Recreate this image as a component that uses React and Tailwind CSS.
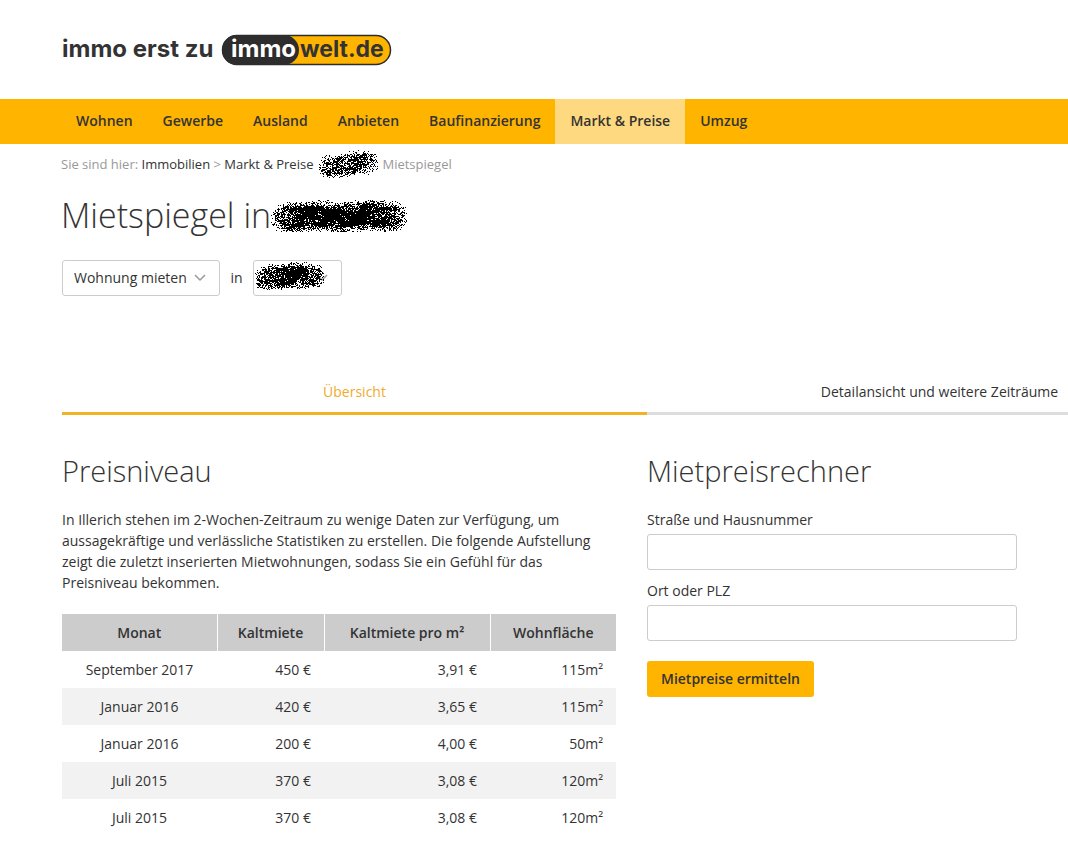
import React from "react";

const NAV = ["Wohnen", "Gewerbe", "Ausland", "Anbieten", "Baufinanzierung", "Markt & Preise", "Umzug"];

const ROWS = [
  ["September 2017", "450 €", "3,91 €", "115m²"],
  ["Januar 2016", "420 €", "3,65 €", "115m²"],
  ["Januar 2016", "200 €", "4,00 €", "50m²"],
  ["Juli 2015", "370 €", "3,08 €", "120m²"],
  ["Juli 2015", "370 €", "3,08 €", "120m²"],
];

// Builds a spray-paint stroke: dense in the middle, speckled towards the edge.
function sprayPath(width, height, seed, tilt, density) {
  let s = seed;
  const rand = () => {
    s = (s + 0x6d2b79f5) | 0;
    let t = Math.imul(s ^ (s >>> 15), 1 | s);
    t = (t + Math.imul(t ^ (t >>> 7), 61 | t)) ^ t;
    return ((t ^ (t >>> 14)) >>> 0) / 4294967296;
  };
  const r = (height - Math.abs(tilt)) / 2;
  let d = "";
  for (let y = 0; y < height; y++) {
    for (let x = 0; x < width; x++) {
      const cx = Math.min(Math.max(x, r), width - r);
      const cy = height / 2 + tilt * (0.5 - cx / width) + Math.sin(cx / 9);
      const dist = Math.hypot(x - cx, y - cy) / r;
      const ends = Math.min(1, Math.min(x, width - x) / (r * 2));
      const blotch = 0.12 * Math.sin(x / 7 + seed) * Math.cos(y / 4 + x / 11);
      const core = density * (0.6 + 0.4 * ends) + blotch;
      const p = core * Math.min(1, (1.1 - dist) * 1.9);
      if (rand() < p) d += `M${x} ${y}h1v1h-1z`;
    }
  }
  return d;
}

function Spray({ width, height, seed, tilt = 0, density = 0.92, className }) {
  return (
    <svg
      aria-hidden="true"
      width={width}
      height={height}
      viewBox={`0 0 ${width} ${height}`}
      shapeRendering="crispEdges"
      className={className}
    >
      <path d={sprayPath(width, height, seed, tilt, density)} fill="#000" />
    </svg>
  );
}

function Logo() {
  return (
    <svg width="332" height="34" viewBox="0 0 332 34" role="img" aria-label="immo erst zu immowelt.de" className="block">
      <g fontFamily="Inter, sans-serif" fontWeight="700" fontSize="23">
        <text x="1" y="24" fill="#333" fontSize="24">immo erst zu</text>
        <rect x="161.500" y="2.500" width="168" height="29" rx="14.500" fill="#ffb400" stroke="#2d2d2d" strokeWidth="1.500" />
        <path d="M176 2H223a15 15 0 0 1 0 30H176a15 15 0 0 1 0-30z" fill="#2d2d2d" />
        <text x="170" y="24" fill="#fff" fontSize="24">immo</text>
        <text x="239" y="24" fill="#333">welt.de</text>
      </g>
    </svg>
  );
}

function Chevron({ className }) {
  return (
    <svg aria-hidden="true" width="12" height="8" viewBox="0 0 12 8" className={className}>
      <path d="M1 1l5 5 5-5" fill="none" stroke="#999" strokeWidth="1.500" />
    </svg>
  );
}

export default function App() {
  return (
    <div className="overflow-x-hidden bg-white pb-4 font-['Open_Sans',sans-serif] text-sm text-[#333]">
      <header>
        <div className="px-[61px] pt-[33px] pb-8">
          <a href="#" className="inline-block align-top"><Logo /></a>
        </div>
        <nav className="flex h-[45px] bg-[#ffb400] px-[61px]">
          {NAV.map((n) => (
            <a
              key={n}
              href="#"
              className={`flex items-center px-[15px] pb-0.5 font-semibold whitespace-nowrap ${n === "Markt & Preise" ? "bg-[#ffd980]" : ""}`}
            >
              {n}
            </a>
          ))}
        </nav>
      </header>

      <main className="pl-[61px]">
        <div className="flex h-10 items-center text-[13px] whitespace-pre text-[#999]">
          <span>Sie sind hier: </span>
          <a href="#" className="text-[#333]">Immobilien</a>
          <span> &gt; </span>
          <a href="#" className="text-[#333]">Markt &amp; Preise</a>
          <Spray width={61} height={28} seed={7} tilt={5} density={0.75} className="mx-1" />
          <span>Mietspiegel</span>
        </div>

        <div className="flex h-16 items-center">
          <h1 className="pb-0.5 text-[34px] font-light">Mietspiegel in</h1>
          <Spray width={136} height={32} seed={21} tilt={2} />
        </div>

        <div className="mt-3 ml-px flex items-center">
          <div className="relative">
            <select aria-label="Angebotsart" className="h-9 w-[158px] appearance-none rounded-[3px] border border-[#ccc] bg-white pl-[11px]">
              <option>Wohnung mieten</option>
            </select>
            <Chevron className="pointer-events-none absolute top-[14px] right-[14px]" />
          </div>
          <span className="w-[33px] text-center">in</span>
          <div className="relative">
            <select aria-label="Ort" className="h-9 w-[89px] appearance-none rounded-[3px] border border-[#ccc] bg-white" />
            <Chevron className="pointer-events-none absolute top-[14px] right-[14px]" />
            <Spray width={70} height={28} seed={33} tilt={2} className="pointer-events-none absolute top-[2px] left-[1px]" />
          </div>
        </div>

        <div role="tablist" className="mt-[76px] ml-px grid min-w-[1170px] grid-cols-2">
          <button role="tab" aria-selected="true" className="h-[43px] border-b-3 border-[#f0b323] pb-[1px] text-[#f0ab2c]">Übersicht</button>
          <button role="tab" aria-selected="false" className="h-[43px] border-b-3 border-[#ddd] pb-[1px]">Detailansicht und weitere Zeiträume</button>
        </div>

        <div className="mt-[34px] ml-px grid min-w-[1170px] grid-cols-2">
          <section className="pr-[31px]">
            <h2 className="text-[29px] leading-[44px] font-light">Preisniveau</h2>
            <p className="mt-4 leading-[21px]">
              In Illerich stehen im 2-Wochen-Zeitraum zu wenige Daten zur Verfügung, um aussagekräftige und verlässliche
              Statistiken zu erstellen. Die folgende Aufstellung zeigt die zuletzt inserierten Mietwohnungen, sodass Sie
              ein Gefühl für das Preisniveau bekommen.
            </p>
            <table className="mt-[21px] w-full table-fixed">
              <colgroup>
                <col className="w-[155px]" />
                <col className="w-[107px]" />
                <col className="w-[166px]" />
                <col />
              </colgroup>
              <thead>
                <tr className="h-[37px] bg-[#ccc]">
                  <th className="border-r border-white font-semibold">Monat</th>
                  <th className="border-r border-white font-semibold">Kaltmiete</th>
                  <th className="border-r border-white font-semibold">Kaltmiete pro m²</th>
                  <th className="font-semibold">Wohnfläche</th>
                </tr>
              </thead>
              <tbody>
                {ROWS.map((r, i) => (
                  <tr key={i} className="h-[37px] even:bg-[#f2f2f2]">
                    <td className="text-center">{r[0]}</td>
                    <td className="pr-[13px] text-right">{r[1]}</td>
                    <td className="pr-[13px] text-right">{r[2]}</td>
                    <td className="pr-[13px] text-right">{r[3]}</td>
                  </tr>
                ))}
              </tbody>
            </table>
          </section>

          <section>
            <h2 className="text-[29px] leading-[44px] font-light">Mietpreisrechner</h2>
            <form className="mt-4 w-[370px]">
              <label htmlFor="strasse" className="block leading-[21px]">Straße und Hausnummer</label>
              <input id="strasse" className="mt-1 block h-9 w-full rounded-[3px] border border-[#ccc] px-3" />
              <label htmlFor="ort" className="mt-[10px] block leading-[21px]">Ort oder PLZ</label>
              <input id="ort" className="mt-1 block h-9 w-full rounded-[3px] border border-[#ccc] px-3" />
              <button type="button" className="mt-5 h-9 rounded-[3px] bg-[#ffb400] px-[14px] font-semibold">Mietpreise ermitteln</button>
            </form>
          </section>
        </div>
      </main>
    </div>
  );
}
